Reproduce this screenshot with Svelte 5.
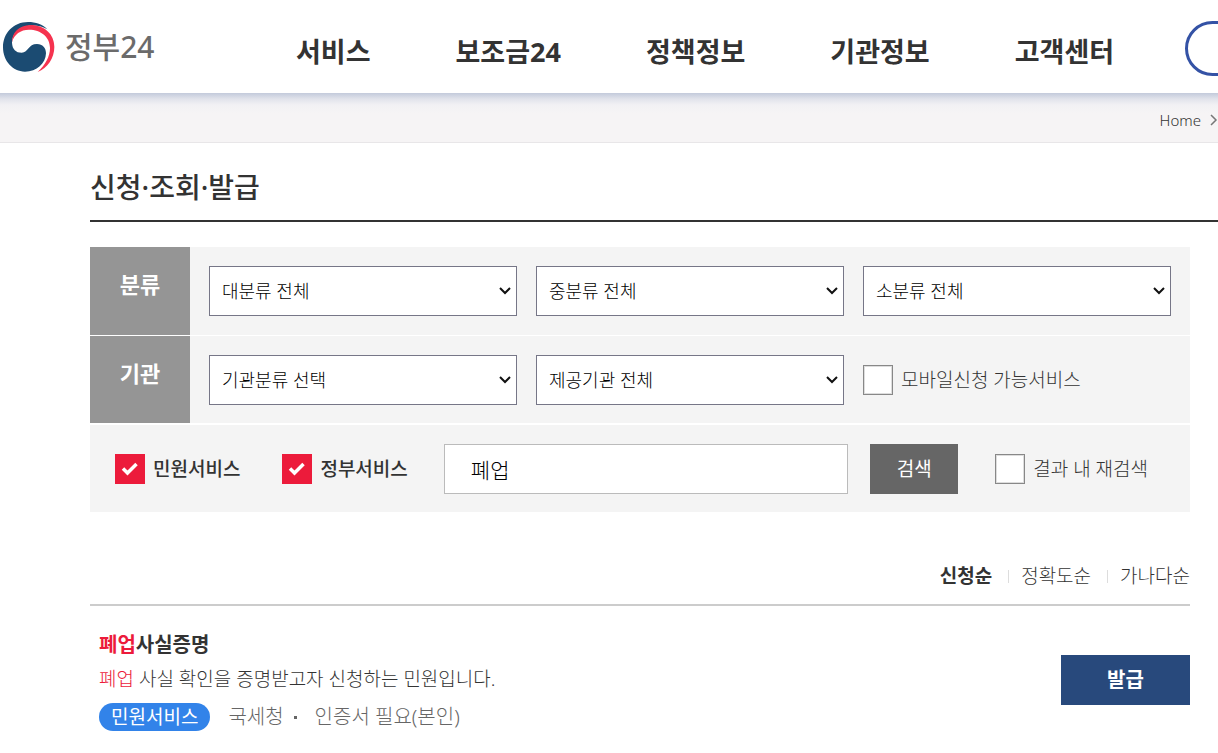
<script>
    const menu = ["서비스", "보조금24", "정책정보", "기관정보", "고객센터"];
    const sorts = ["신청순", "정확도순", "가나다순"];

    let keyword = "폐업";
    let civil = true;
    let gov = true;
    let mobile = false;
    let within = false;
    let sort = "신청순";
</script>

<header class="header">
    <a class="logo" href="#home">
        <svg width="52" height="50" viewBox="9 66 156 150" aria-hidden="true">
            <path fill="#1b4b72" d="M75 215C38 215 9 183 9 142C9 99 41 66 84 66C107 66 128 73 142 88C128 79 108 74 86 77C57 81 37 99 36 128C37 148 48 158 65 158C86 157 84 132 111 132C128 132 138 144 138 160C137 191 110 215 75 215Z" />
            <path fill="#f5334f" d="M36 127C36 96 57 76 91 75C133 75 163 102 163 141C163 174 143 204 113 216C136 195 150 169 150 144C150 111 123 89 87 89C62 89 42 103 36 127Z" />
        </svg>
        <span>정부24</span>
    </a>
    <nav class="menu">
        {#each menu as item}
            <a href="#menu">{item}</a>
        {/each}
    </nav>
    <button class="search-open" aria-label="검색 열기"></button>
</header>

<div class="breadcrumb">
    <a href="#home">Home</a>
    <svg width="8" height="12" viewBox="0 0 8 12" aria-hidden="true">
        <path d="M1 1L6 6L1 11" fill="none" stroke="#777" stroke-width="1.5" />
    </svg>
</div>

<main>
    <h1>신청·조회·발급</h1>

    <div class="content">
        <form class="filters">
            <div class="row first">
                <div class="row-name">분류</div>
                <div class="fields">
                    <select aria-label="대분류"><option>대분류 전체</option></select>
                    <select aria-label="중분류"><option>중분류 전체</option></select>
                    <select aria-label="소분류"><option>소분류 전체</option></select>
                </div>
            </div>
            <div class="row">
                <div class="row-name">기관</div>
                <div class="fields">
                    <select aria-label="기관분류"><option>기관분류 선택</option></select>
                    <select aria-label="제공기관"><option>제공기관 전체</option></select>
                    <label class="check"><input type="checkbox" bind:checked={mobile}><span>모바일신청 가능서비스</span></label>
                </div>
            </div>
            <div class="row search">
                <label class="check strong"><input type="checkbox" bind:checked={civil}><span>민원서비스</span></label>
                <label class="check strong"><input type="checkbox" bind:checked={gov}><span>정부서비스</span></label>
                <input class="keyword" type="text" aria-label="검색어" bind:value={keyword}>
                <button class="submit" type="button">검색</button>
                <label class="check"><input type="checkbox" bind:checked={within}><span>결과 내 재검색</span></label>
            </div>
        </form>

        <div class="sorts">
            {#each sorts as item}
                <button class:active={sort === item} on:click={() => sort = item}>{item}</button>
            {/each}
        </div>

        <article class="result">
            <div class="info">
                <h2><a href="#detail"><em>폐업</em>사실증명</a></h2>
                <p><em>폐업</em> 사실 확인을 증명받고자 신청하는 민원입니다.</p>
                <div class="meta">
                    <span class="badge">민원서비스</span>
                    <span>국세청</span>
                    <i></i>
                    <span>인증서 필요(본인)</span>
                </div>
            </div>
            <button class="issue">발급</button>
        </article>
    </div>
</main>

<style>
    :global(body) {
        background: #fff;
        color: #333;
        font-family: "Noto Sans", "Noto Sans CJK KR", sans-serif;
        font-size: 19px;
        font-weight: 300;
        line-height: 28px;
        overflow-x: hidden;
    }

    a {
        color: inherit;
        text-decoration: none;
    }

    button,
    input,
    select {
        box-sizing: border-box;
        margin: 0;
        border-radius: 0;
        font: inherit;
    }

    button {
        padding: 0;
        border: none;
        cursor: pointer;
    }

    em {
        color: #ec1b3b;
        font-style: normal;
    }

    .header {
        display: flex;
        align-items: center;
        height: 93px;
        padding-left: 3px;
        overflow: hidden;
    }

    .logo {
        display: flex;
        flex: none;
        align-items: center;
        gap: 10px;
        width: 293px;
        color: #6b6b6b;
        font-size: 30px;
        font-weight: 500;
    }

    .menu {
        display: flex;
        flex: none;
        gap: 85px;
        margin-right: 71px;
        padding-top: 10px;
        font-size: 27px;
        font-weight: 700;
        line-height: 40px;
    }

    .search-open {
        flex: none;
        width: 200px;
        height: 55px;
        margin-top: 4px;
        border: 3px solid #3452a5;
        border-radius: 28px;
        background: #fff;
    }

    .breadcrumb {
        display: flex;
        align-items: center;
        justify-content: flex-end;
        gap: 9px;
        height: 50px;
        padding-top: 4px;
        box-sizing: border-box;
        border-bottom: 1px solid #e8e6e8;
        background: linear-gradient(#c3cadb, #e1e3eb 6px, #f2f1f4 12px, #f6f4f5 20px);
        font-size: 15px;
    }

    main {
        padding-left: 90px;
    }

    h1 {
        margin: 0;
        padding: 24px 0 13px;
        border-bottom: 2px solid #333;
        font-size: 28px;
        font-weight: 500;
        line-height: 40px;
    }

    .content {
        margin: 25px 28px 0 0;
    }

    .row {
        display: flex;
        min-height: 87px;
        margin-top: 2px;
        background: #f4f4f4;
    }

    .first {
        min-height: 88px;
        margin: 0 0 1px;
    }

    .first + .row {
        margin-top: 0;
    }

    .row-name {
        width: 100px;
        padding-top: 23px;
        box-sizing: border-box;
        background: #959595;
        color: #fff;
        font-size: 22px;
        font-weight: 700;
        text-align: center;
    }

    .fields {
        display: grid;
        flex: 1;
        grid-template-columns: repeat(3, 1fr);
        align-items: center;
        gap: 19px;
        padding: 0 19px;
    }

    select {
        appearance: none;
        width: 100%;
        height: 50px;
        padding: 0 30px 0 12px;
        border: 1px solid #767687;
        background: #fff url("data:image/svg+xml,%3Csvg xmlns='http://www.w3.org/2000/svg' width='12' height='8'%3E%3Cpath d='M1 1L6 6L11 1' fill='none' stroke='%23111' stroke-width='2'/%3E%3C/svg%3E") no-repeat right 5px center;
        color: #000;
        font-size: 18px;
    }

    .check {
        display: flex;
        align-items: center;
        gap: 8px;
        white-space: nowrap;
    }

    .check input {
        appearance: none;
        width: 30px;
        height: 30px;
        border: 1px solid #888;
        background: #fff;
        box-shadow: inset 0 0 0 1px #ddd;
    }

    .check input:checked {
        border: none;
        background: #ec1b3b url("data:image/svg+xml,%3Csvg xmlns='http://www.w3.org/2000/svg' width='30' height='30'%3E%3Cpath d='M8 14.500L12.500 19L21.500 10' fill='none' stroke='white' stroke-width='3.500'/%3E%3C/svg%3E");
        box-shadow: none;
    }

    .strong {
        margin-right: 36px;
        font-weight: 500;
    }

    .strong:first-child {
        margin-right: 42px;
    }

    .search {
        align-items: center;
        padding: 0 42px 0 25px;
    }

    .keyword {
        flex: 1;
        min-width: 100px;
        height: 50px;
        padding: 0 26px;
        border: 1px solid #bbb;
        background: #fff;
        color: #000;
        font-size: 21px;
    }

    .submit {
        width: 88px;
        height: 50px;
        margin: 0 37px 0 22px;
        background: #666;
        color: #fff;
        font-weight: 400;
    }

    .sorts {
        display: flex;
        justify-content: flex-end;
        padding: 50px 0 14px;
        border-bottom: 2px solid #ccc;
    }

    .sorts button {
        display: flex;
        align-items: center;
        background: none;
        color: #333;
    }

    .sorts button + button::before {
        width: 1px;
        height: 13px;
        margin: 0 12px 0 16px;
        background: #ddd;
        content: "";
    }

    .sorts .active {
        font-weight: 700;
    }

    .result {
        display: flex;
        align-items: center;
        justify-content: space-between;
        padding: 23px 0 22px 9px;
    }

    h2 {
        margin: 0;
        font-size: 20px;
        font-weight: 700;
        line-height: 32px;
    }

    p {
        margin: 4px 0 10px;
    }

    .meta {
        display: flex;
        align-items: center;
        color: #666;
        font-size: 20px;
    }

    .badge {
        margin-right: 18px;
        padding: 0 12px;
        border-radius: 14px;
        background: #3283e9;
        color: #fff;
        font-size: 19px;
        font-weight: 400;
    }

    .meta i {
        width: 3px;
        height: 3px;
        margin: 0 18px 0 10px;
        background: #666;
    }

    .issue {
        width: 129px;
        height: 50px;
        background: #28497c;
        color: #fff;
        font-size: 20px;
        font-weight: 700;
    }
</style>
